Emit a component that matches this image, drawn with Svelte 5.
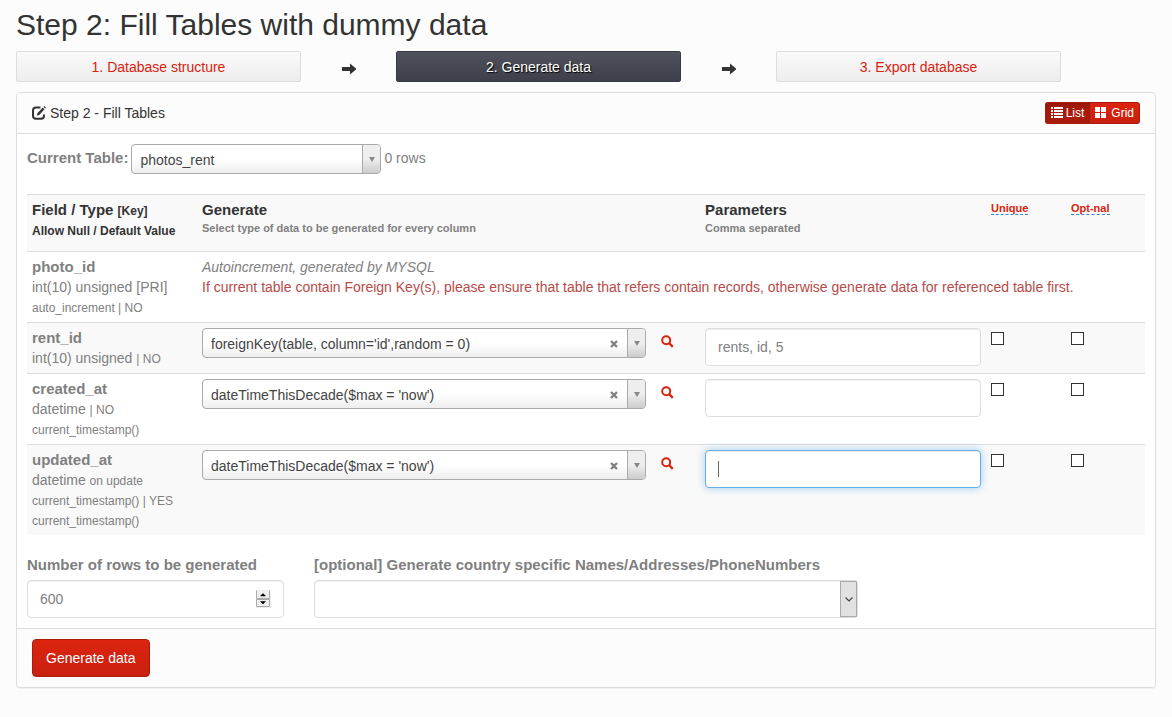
<script>
  const fakers = ["foreignKey(table, column='id',random = 0)", "dateTimeThisDecade($max = 'now')"];

  let rows = $state([
    { name: 'rent_id', type: 'int(10) unsigned', lines: ['| NO'], faker: fakers[0], params: 'rents, id, 5', unique: false, optional: false },
    { name: 'created_at', type: 'datetime', lines: ['| NO', 'current_timestamp()'], faker: fakers[1], params: '', unique: false, optional: false },
    { name: 'updated_at', type: 'datetime', lines: ['on update', 'current_timestamp() | YES', 'current_timestamp()'], faker: fakers[1], params: '', unique: false, optional: false, active: true }
  ]);
  let count = $state(600);
  let view = $state('list');
</script>

{#snippet arrow()}
  <svg class="arrow" viewBox="0 0 14 12" width="14" height="12" aria-hidden="true"><path d="M0 4h8V0.500L14.500 6 8 11.500V8H0z" /></svg>
{/snippet}

<main>
  <h1>Step 2: Fill Tables with dummy data</h1>

  <nav class="steps">
    <a class="step" href="#structure">1. Database structure</a>
    {@render arrow()}
    <a class="step current" href="#generate" aria-current="step">2. Generate data</a>
    {@render arrow()}
    <a class="step" href="#export">3. Export database</a>
  </nav>

  <form class="panel" onsubmit={(e) => e.preventDefault()}>
    <header>
      <h2>
        <svg viewBox="0 0 14 14" width="14" height="14" aria-hidden="true">
          <path d="M8.500 1.600H4Q1 1.600 1 4.500V9.800Q1 12.800 4 12.800H9Q12 12.800 12 9.800V8.500" fill="none" stroke="#333" stroke-width="2" />
          <path d="M4.800 9.500L5.400 7.200 10.800 1.600 12.500 3.300 7.200 8.900z M11.500 0.900L12.300 0 14 1.700 13.200 2.600z" fill="#333" />
        </svg>
        Step 2 - Fill Tables
      </h2>
      <div class="views">
        <button type="button" class:pressed={view === 'list'} onclick={() => (view = 'list')}>
          <svg viewBox="0 0 12 12" width="12" height="12" aria-hidden="true"><path d="M0 0h2v2H0zM3 0h9v2H3zM0 3h2v2H0zM3 3h9v2H3zM0 6h2v2H0zM3 6h9v2H3zM0 9h2v2H0zM3 9h9v2H3z" fill="#fff" /></svg>List
        </button>
        <button type="button" class:pressed={view === 'grid'} onclick={() => (view = 'grid')}>
          <svg viewBox="0 0 12 12" width="12" height="12" aria-hidden="true"><path d="M0 0h5v5H0zM6 0h5v5H6zM0 6h5v5H0zM6 6h5v5H6z" fill="#fff" /></svg>Grid
        </button>
      </div>
    </header>

    <div class="body">
      <div class="current-table">
        <label for="table">Current Table:</label>
        <span class="picker table-picker">
          <select id="table"><option>photos_rent</option></select>
          <span class="drop"></span>
        </span>
        <span>0 rows</span>
      </div>

      <table>
        <colgroup>
          <col class="c-field" /><col class="c-generate" /><col /><col class="c-unique" /><col class="c-optional" />
        </colgroup>
        <thead>
          <tr>
            <th>Field / Type <small>[Key]<br />Allow Null / Default Value</small></th>
            <th>Generate<span class="hint">Select type of data to be generated for every column</span></th>
            <th>Parameters<span class="hint">Comma separated</span></th>
            <th class="tip"><a href="#unique">Unique</a></th>
            <th class="tip"><a href="#optional">Opt-nal</a></th>
          </tr>
        </thead>
        <tbody>
          <tr>
            <td><b>photo_id</b><br />int(10) unsigned [PRI]<br /><small>auto_increment | NO</small></td>
            <td colspan="4"><em>Autoincrement, generated by MYSQL</em><br /><span class="warning">If current table contain Foreign Key(s), please ensure that table that refers contain records, otherwise generate data for referenced table first.</span></td>
          </tr>
          {#each rows as row}
            <tr>
              <td><b>{row.name}</b><br />{row.type}
                {#each row.lines as line, i}{#if i}<br />{/if}<small>{line}</small>{/each}
              </td>
              <td>
                <div class="generator">
                  <span class="picker">
                    <select bind:value={row.faker} aria-label="Generator for {row.name}">
                      {#each fakers as faker}<option>{faker}</option>{/each}
                    </select>
                    <button type="button" class="clear" aria-label="Clear"><svg viewBox="0 0 8 8" width="8" height="8"><path d="M1 1l6 6M7 1l-6 6" stroke="#808080" stroke-width="2.400" /></svg></button>
                    <span class="drop"></span>
                  </span>
                  <button type="button" class="search" aria-label="Search generators"><svg viewBox="0 0 13 13" width="13" height="13"><circle cx="5.200" cy="5.200" r="4" fill="none" stroke="#d9230f" stroke-width="2" /><path d="M8 8l3.800 3.800" stroke="#d9230f" stroke-width="2.400" /></svg></button>
                </div>
              </td>
              <td class="params">
                <div class="field">
                  <input class="control" class:focused={row.active} type="text" bind:value={row.params} aria-label="Parameters for {row.name}" />
                  {#if row.active}<span class="caret"></span>{/if}
                </div>
              </td>
              <td><input type="checkbox" bind:checked={row.unique} aria-label="{row.name} unique" /></td>
              <td><input type="checkbox" bind:checked={row.optional} aria-label="{row.name} optional" /></td>
            </tr>
          {/each}
        </tbody>
      </table>

      <div class="options">
        <div class="amount">
          <label for="count">Number of rows to be generated</label>
          <div class="field">
            <input id="count" class="control" type="number" bind:value={count} />
            <svg class="spinner" viewBox="0 0 15 18" width="15" height="18" aria-hidden="true">
              <rect width="15" height="18" fill="#eee" />
              <path d="M0.500 0.500V8.500H13.500V0.500M0.500 9.500V16.500H13.500V9.500H0.500" fill="none" stroke="#aaa" />
              <path d="M4.500 6L7 3.500 9.500 6zM4.500 11.500H9.500L7 14z" fill="#000" stroke="#000" stroke-width="0.500" />
            </svg>
          </div>
        </div>
        <div class="country">
          <label for="country">[optional] Generate country specific Names/Addresses/PhoneNumbers</label>
          <div class="field">
            <select id="country" class="control"><option></option></select>
            <span class="native-drop"><svg viewBox="0 0 8 5" width="8" height="5"><path d="M0.500 0.500L4 4 7.500 0.500" fill="none" stroke="#444" stroke-width="1.200" /></svg></span>
          </div>
        </div>
      </div>
    </div>

    <footer><button type="submit" class="submit">Generate data</button></footer>
  </form>
</main>

<style>
  :global(body) {
    margin: 0;
    background: #fcfcfc;
    color: #808080;
    font: 14px/20px 'Liberation Sans', Arial, sans-serif;
  }
  main, main * { box-sizing: border-box; }
  main { padding: 8px 16px 24px; }
  button, input, select { font: inherit; margin: 0; }
  h1 { margin: 0 0 10px; font-size: 30px; line-height: 33px; font-weight: 400; color: #333; }
  a { color: #d9230f; text-decoration: none; }
  svg { display: block; }

  .steps {
    display: grid;
    grid-template-columns: 3fr 1fr 3fr 1fr 3fr 1fr;
    align-items: center;
    margin-bottom: 10px;
  }
  .step {
    height: 31px;
    border: 1px solid #ddd;
    border-radius: 2px;
    background: linear-gradient(#fafafa, #ededed);
    line-height: 31px;
    text-align: center;
  }
  .step.current {
    border-color: #373a43;
    background: linear-gradient(#4f525d, #3d404a);
    color: #fff;
    text-shadow: 1px 1px 1px #000;
  }
  .arrow { justify-self: center; margin-top: 4px; fill: #333; }

  .panel {
    border: 1px solid #ddd;
    border-radius: 4px;
    background: #fff;
    box-shadow: 0 1px 1px rgba(0, 0, 0, 0.05);
  }
  header {
    display: flex;
    justify-content: space-between;
    align-items: center;
    height: 41px;
    padding: 0 15px;
    border-bottom: 1px solid #ddd;
    border-radius: 3px 3px 0 0;
    background: #fcfcfc;
  }
  h2 {
    display: flex;
    align-items: center;
    gap: 4px;
    margin: 0;
    font-size: 14px;
    font-weight: 400;
    color: #333;
  }
  .views { display: flex; }
  .views button {
    display: flex;
    align-items: center;
    gap: 3px;
    height: 22px;
    padding: 0 5px;
    border: 1px solid #a91b0c;
    border-radius: 0 3px 3px 0;
    background: linear-gradient(#dc2410, #c9200e);
    color: #fff;
    font-size: 12px;
  }
  .views button:first-child { padding-right: 6px; border-right: 0; border-radius: 3px 0 0 3px; }
  .views button:last-child { gap: 4px; border-left: 0; }
  .views .pressed {
    background: #a91b0c;
    box-shadow: inset 0 3px 5px rgba(0, 0, 0, 0.125);
  }

  .body { padding: 10px; }
  .current-table { display: flex; gap: 3px; line-height: 28px; }
  label, th, b { font-size: 15px; font-weight: 700; }

  .picker { position: relative; display: block; flex: 1; height: 30px; }
  .table-picker { flex: 0 0 250px; }
  .picker select {
    appearance: none;
    width: 100%;
    height: 30px;
    padding: 2px 50px 0 8px;
    border: 1px solid #aaa;
    border-radius: 4px;
    background: linear-gradient(#fff 50%, #eee);
    color: #444;
    line-height: 26px;
  }
  .drop {
    position: absolute;
    inset: 1px 1px 1px auto;
    display: grid;
    place-items: center;
    width: 18px;
    border-left: 1px solid #aaa;
    border-radius: 0 3px 3px 0;
    background: linear-gradient(#eee 50%, #ccc);
    pointer-events: none;
  }
  .drop::after {
    content: '';
    border: 3px solid transparent;
    border-top: 5px solid #888;
    border-bottom: 0;
  }
  .clear { position: absolute; inset: 11px 27px auto auto; padding: 1px; border: 0; background: none; }

  table {
    width: 100%;
    margin: 20px 0;
    border-collapse: collapse;
    table-layout: fixed;
  }
  .c-field { width: 170px; }
  .c-generate { width: 45%; }
  .c-unique { width: 80px; }
  .c-optional { width: 79px; }
  th, td { padding: 5px; border-top: 1px solid #ddd; text-align: left; vertical-align: top; }
  thead tr { height: 57px; }
  thead tr, tbody tr:nth-child(even) { background: #f9f9f9; }
  th { color: #333; }
  b { line-height: 16px; }
  small { font-size: 12px; line-height: 12px; }
  .hint { display: block; font-size: 11px; line-height: 16px; color: #808080; }
  .tip { font-size: 11px; line-height: 12px; padding-top: 7px; }
  .tip a { border-bottom: 1px dashed #3a87c8; }
  .warning { color: #b94a48; white-space: nowrap; }

  .generator { display: flex; align-items: flex-start; height: 30px; padding-right: 34px; }
  .generator .picker { min-width: 0; }
  .search { margin: 7px -13px 0 15px; padding: 0; width: 13px; border: 0; background: none; }
  .params { height: 50px; padding-bottom: 0; }
  .field { position: relative; }
  .control {
    display: block;
    appearance: none;
    width: 100%;
    height: 38px;
    padding: 8px 12px;
    border: 1px solid #ddd;
    border-radius: 4px;
    background: #fff;
    box-shadow: inset 0 1px 1px rgba(0, 0, 0, 0.075);
    color: #808080;
  }
  .control::-webkit-inner-spin-button { appearance: none; }
  .control:focus, .focused {
    border-color: #66afe9;
    outline: 0;
    box-shadow: inset 0 1px 1px rgba(0, 0, 0, 0.075), 0 0 8px rgba(102, 175, 233, 0.6);
  }
  .caret { position: absolute; left: 13px; top: 11px; width: 1px; height: 16px; background: #666; }
  input[type='checkbox'] {
    appearance: none;
    display: block;
    width: 13px;
    height: 13px;
    margin-top: 4px;
    border: 1px solid #333;
    background: #fff;
  }
  input[type='checkbox']:checked { box-shadow: inset 0 0 0 2px #fff; background: #333; }

  .options { display: grid; grid-template-columns: repeat(12, 1fr); gap: 30px; }
  .options label { display: block; margin-bottom: 5px; white-space: nowrap; }
  .amount { grid-column: span 3; }
  .country { grid-column: span 6; }
  .spinner { position: absolute; right: 13px; top: 10px; }
  .native-drop {
    position: absolute;
    inset: 1px 1px 1px auto;
    display: grid;
    place-items: center;
    width: 17px;
    border: 1px solid #aaa;
    background: #e1e1e1;
    pointer-events: none;
  }

  footer {
    padding: 10px 15px;
    border-top: 1px solid #ddd;
    border-radius: 0 0 3px 3px;
    background: #fcfcfc;
  }
  .submit {
    height: 38px;
    padding: 0 13px;
    border: 1px solid #a91b0c;
    border-radius: 4px;
    background: linear-gradient(#dc2410, #c9200e);
    color: #fff;
  }
</style>
